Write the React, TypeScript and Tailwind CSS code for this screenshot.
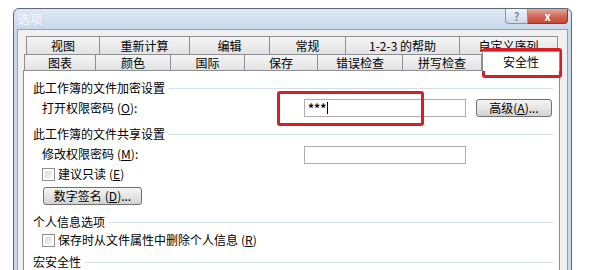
import React from 'react';

const font = { fontFamily: '"Noto Sans CJK SC", "Liberation Sans", sans-serif' };

const row1 = [
  { label: '视图', w: 'w-[74px]' },
  { label: '重新计算', w: 'w-[90px]' },
  { label: '编辑', w: 'w-[80px]' },
  { label: '常规', w: 'w-[76px]' },
  { label: '1-2-3 的帮助', w: 'w-[114px]' },
  { label: '自定义序列', w: 'w-[98px]' },
];

const row2 = [
  { label: '图表', w: 'w-[72px]' },
  { label: '颜色', w: 'w-[75px]' },
  { label: '国际', w: 'w-[74px]' },
  { label: '保存', w: 'w-[73px]' },
  { label: '错误检查', w: 'w-[85px]' },
  { label: '拼写检查', w: 'w-[79px]' },
];

function Tab({ label, w, first }: { label: string; w: string; first?: boolean }) {
  return (
    <div
      className={`${w} h-full flex items-center justify-center border-t border-r border-[#8c8e94] bg-gradient-to-b from-[#f5f5f5] to-[#e2e2e2] text-[12px] leading-none text-black ${first ? 'border-l' : ''}`}
    >
      {label}
    </div>
  );
}

function Heading({ text, className = '' }: { text: string; className?: string }) {
  return (
    <div className={`h-[16px] flex items-center gap-[4px] ${className}`}>
      <span className="text-[12px] leading-none whitespace-nowrap">{text}</span>
      <div className="flex-1 h-px bg-[#d5dfe5]" />
    </div>
  );
}

function Checkbox() {
  return (
    <div className="w-[13px] h-[13px] border border-[#8f8f8f] bg-white p-[2px]">
      <div className="w-full h-full bg-gradient-to-br from-[#dcdcdc] to-[#f4f4f4]" />
    </div>
  );
}

function Button({ children, className = '' }: { children: React.ReactNode; className?: string }) {
  return (
    <div
      className={`h-[18px] flex items-center justify-center rounded-[3px] border border-[#707070] bg-gradient-to-b from-[#f4f4f4] via-[#e6e6e6] to-[#d2d2d2] text-[12px] leading-none text-black ${className}`}
    >
      {children}
    </div>
  );
}

function Key({ k }: { k: string }) {
  return (
    <span className="ml-[3px]">
      (<span className="underline">{k}</span>)
    </span>
  );
}

export default function App() {
  return (
    <div className="relative w-[592px] h-[270px] overflow-hidden bg-white text-black" style={font}>
      {/* Window */}
      <div className="ml-[13px] mt-[8px] w-[559px] h-[300px] border border-[#5a6878] rounded-t-[6px] bg-[#c9d8ea] flex flex-col">
        {/* Title bar */}
        <div className="h-[20px] flex justify-between bg-gradient-to-b from-[#dfe8f3] to-[#c9d8ea] rounded-t-[6px]">
          <span className="pl-[4px] pt-[4px] text-[12px] leading-none text-[#f7fafd]">选项</span>
          <div className="flex mr-[3px] h-[15px]">
            <div className="w-[23px] h-full flex items-center justify-center border border-t-0 border-[#8296ad] rounded-bl-[4px] bg-gradient-to-b from-[#f0f4f9] to-[#cdd9e7] text-[11px] font-bold leading-none text-[#7c8a9a]">
              ?
            </div>
            <div className="w-[40px] h-full flex items-center justify-center border border-t-0 border-l-0 border-[#8b3a32] rounded-br-[4px] bg-gradient-to-b from-[#e9a89a] via-[#d16a5a] to-[#c44838] text-[11px] font-bold leading-none text-white">
              x
            </div>
          </div>
        </div>

        {/* Body */}
        <div className="flex-1 mx-[3px] border border-b-0 border-[#8da2b8] bg-[#f0f0f0] pl-[5px] pr-[7px] pt-[6px]">
          <div className="flex h-[18px] ml-[3px]">
            {row1.map((t, i) => (
              <Tab key={t.label} label={t.label} w={t.w} first={i === 0} />
            ))}
          </div>
          <div className="flex h-[16px] ml-[1px] items-end">
            {row2.map((t, i) => (
              <Tab key={t.label} label={t.label} w={t.w} first={i === 0} />
            ))}
            <div className="relative z-10 w-[78px] h-[20px] -mb-px flex items-center justify-center border-x border-t border-[#8c8e94] bg-white text-[12px] leading-none">
              安全性
            </div>
          </div>

          {/* Panel */}
          <div className="border border-[#8c8e94] bg-white h-[220px] pl-[9px] pr-[6px] pt-[9px]">
            <Heading text="此工作簿的文件加密设置" />
            <div className="mt-[2px] h-[20px] flex items-center pl-[9px]">
              <span className="w-[262px] text-[12px] leading-none">
                打开权限密码<Key k="O" />:
              </span>
              <div className="w-[162px] h-[18px] border border-[#abadb3] flex items-center pl-[3px] text-[12px] font-bold leading-none">
                ***<span className="ml-px w-px h-[12px] bg-black" />
              </div>
              <Button className="ml-[10px] w-[76px]">
                高级(<span className="underline">A</span>)...
              </Button>
            </div>

            <Heading text="此工作簿的文件共享设置" className="mt-[8px]" />
            <div className="mt-[3px] h-[20px] flex items-center pl-[9px]">
              <span className="w-[262px] text-[12px] leading-none -mt-[3px]">
                修改权限密码<Key k="M" />:
              </span>
              <div className="w-[162px] h-[18px] border border-[#abadb3]" />
            </div>

            <div className="mt-[1px] h-[16px] flex items-center gap-[3px] pl-[9px]">
              <Checkbox />
              <span className="text-[12px] leading-none">
                建议只读<Key k="E" />
              </span>
            </div>

            <div className="mt-[5px] pl-[10px]">
              <Button className="w-[99px] h-[17px]">
                数字签名<Key k="D" />...
              </Button>
            </div>

            <Heading text="个人信息选项" className="mt-[9px]" />
            <div className="mt-[2px] h-[16px] flex items-center gap-[3px] pl-[9px]">
              <Checkbox />
              <span className="text-[12px] leading-none">
                保存时从文件属性中删除个人信息<Key k="R" />
              </span>
            </div>

            <Heading text="宏安全性" className="mt-[6px]" />
          </div>
        </div>
      </div>

      {/* Red highlight marks */}
      <div className="absolute left-[482px] top-[48px] w-[80px] h-[30px] border-[3px] border-[#d81e24] rounded-[3px]" />
      <div className="absolute left-[277px] top-[91px] w-[147px] h-[35px] border-[3px] border-[#d81e24] rounded-[3px]" />
    </div>
  );
}
